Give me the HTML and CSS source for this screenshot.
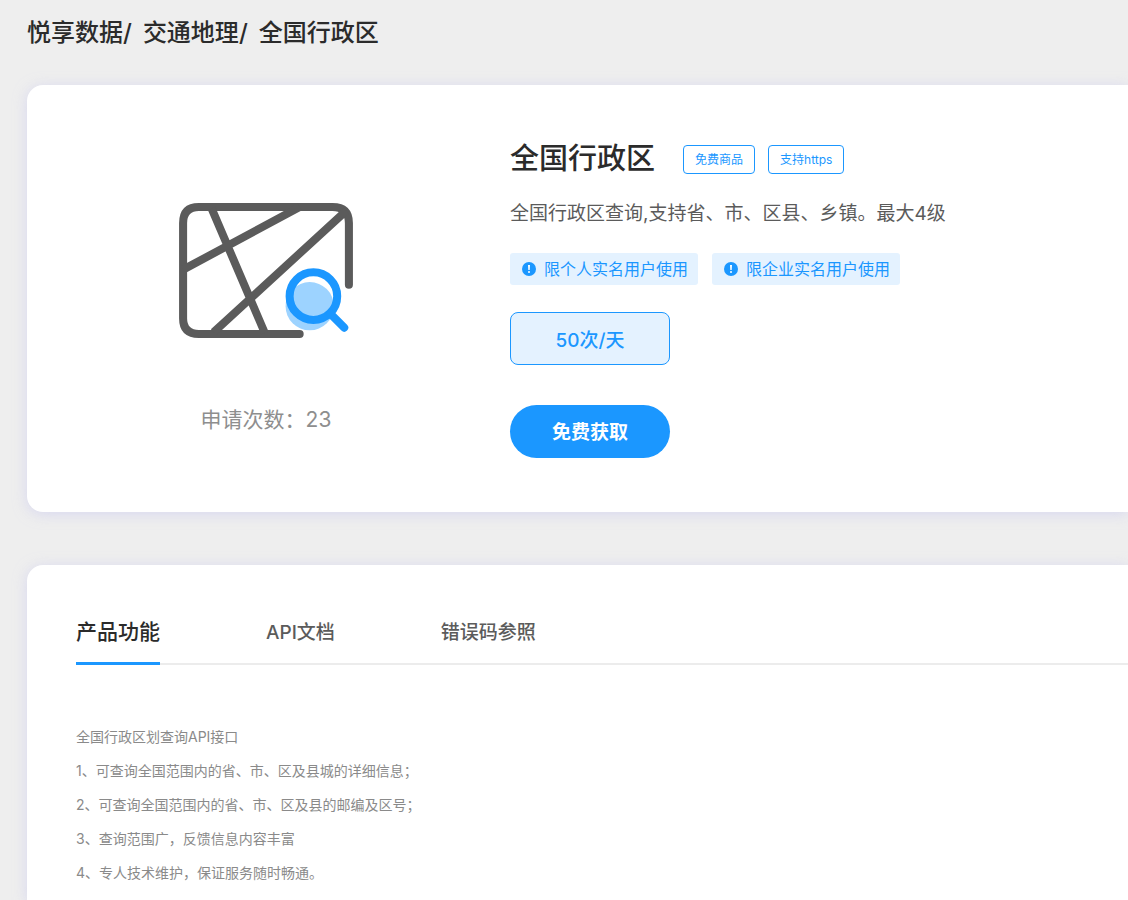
FILE: index.html
```html
<!DOCTYPE html>
<html lang="zh-CN">
<head>
<meta charset="utf-8">
<meta name="viewport" content="width=device-width, initial-scale=1">
<title>全国行政区</title>
<link rel="stylesheet" href="styles.css">
</head>
<body>
<nav class="breadcrumb" aria-label="breadcrumb">
  <a href="#">悦享数据</a><span class="sep">/</span><a href="#">交通地理</a><span class="sep">/</span><span>全国行政区</span>
</nav>
<main class="page">
  <section class="card product">
    <div class="summary">
      <svg class="map-icon" viewBox="42 39 519 403" fill="none" stroke-width="24" aria-hidden="true">
        <g stroke="#5b5b5b">
          <path d="M402 430H101Q54 430 54 384V99Q54 51 101 51H500Q549 51 549 99V283" stroke-linecap="round"/>
          <path d="M54 238L402 51M139 55L298 427M145 425L541 62"/>
        </g>
        <circle cx="432" cy="347" r="72" fill="#9dd3ff"/>
        <g stroke="#1b97ff">
          <circle cx="443" cy="317" r="71"/>
          <path d="M494 370L535 411" stroke-linecap="round"/>
        </g>
      </svg>
      <p class="count">申请次数：23</p>
    </div>
    <div class="detail">
      <div class="heading">
        <h1>全国行政区</h1>
        <div class="badges"><span class="badge">免费商品</span><span class="badge">支持https</span></div>
      </div>
      <p class="description">全国行政区查询,支持省、市、区县、乡镇。最大4级</p>
      <div class="notices">
        <span class="notice"><svg class="alert" viewBox="0 0 14 14" aria-hidden="true"><circle cx="7" cy="7" r="7" fill="#1b97ff"/><path d="M6 3H8L7.700 8H6.300Z" fill="#fff"/><circle cx="7" cy="10" r="1" fill="#fff"/></svg>限个人实名用户使用</span>
        <span class="notice"><svg class="alert" viewBox="0 0 14 14" aria-hidden="true"><circle cx="7" cy="7" r="7" fill="#1b97ff"/><path d="M6 3H8L7.700 8H6.300Z" fill="#fff"/><circle cx="7" cy="10" r="1" fill="#fff"/></svg>限企业实名用户使用</span>
      </div>
      <button class="plan" type="button">50次/天</button>
      <button class="get" type="button">免费获取</button>
    </div>
  </section>
  <section class="card info">
    <div class="tabs" role="tablist">
      <button class="tab active" type="button" role="tab" aria-selected="true">产品功能</button>
      <button class="tab" type="button" role="tab" aria-selected="false">API文档</button>
      <button class="tab" type="button" role="tab" aria-selected="false">错误码参照</button>
    </div>
    <div class="features" role="tabpanel">
      <p>全国行政区划查询API接口</p>
      <p>1、可查询全国范围内的省、市、区及县城的详细信息；</p>
      <p>2、可查询全国范围内的省、市、区及县的邮编及区号；</p>
      <p>3、查询范围广，反馈信息内容丰富</p>
      <p>4、专人技术维护，保证服务随时畅通。</p>
    </div>
  </section>
</main>
</body>
</html>
```
FILE: styles.css
```css
* {
  box-sizing: border-box;
}

body {
  margin: 0;
  background: #eee;
  color: #2b2b2b;
  font-family: Inter, "Noto Sans CJK SC", sans-serif;
}

h1,
p {
  margin: 0;
}

button {
  font-family: inherit;
  cursor: pointer;
}

.breadcrumb {
  padding: 17px 27px 0;
  font-size: 24px;
  font-weight: 500;
  line-height: 32px;
}

.breadcrumb a {
  color: inherit;
  text-decoration: none;
}

.sep {
  margin-right: 11px;
}

.page {
  display: flex;
  flex-direction: column;
  gap: 53px;
  padding: 36px 0 0 27px;
}

.card {
  border-radius: 16px 0 0 16px;
  background: #fff;
  box-shadow: 0 2px 14px rgba(200, 200, 240, 0.6);
}

.product {
  display: flex;
  gap: 5px;
  padding: 54px 0;
}

.summary {
  display: flex;
  flex: 0 0 478px;
  flex-direction: column;
  align-items: center;
  gap: 66px;
  padding-top: 64px;
}

.map-icon {
  width: 174px;
  height: 135px;
}

.count {
  color: #8e8e8e;
  font-size: 21px;
  line-height: 32px;
}

.heading {
  display: flex;
  align-items: center;
  gap: 28px;
}

h1 {
  font-size: 29px;
  font-weight: 500;
  line-height: 40px;
}

.badges {
  display: flex;
  gap: 13px;
}

.badge {
  padding: 0 11px;
  border: 1px solid #1b97ff;
  border-radius: 4px;
  color: #1b97ff;
  font-size: 12px;
  line-height: 27px;
}

.description {
  margin-top: 20px;
  color: #5b5b5b;
  font-size: 19px;
  line-height: 30px;
}

.notices {
  display: flex;
  gap: 14px;
  margin-top: 24px;
}

.notice {
  display: flex;
  align-items: center;
  gap: 8px;
  padding: 0 10px 0 12px;
  border-radius: 3px;
  background: #e4f2ff;
  color: #1b97ff;
  font-size: 16px;
  line-height: 32px;
}

.alert {
  width: 14px;
  height: 14px;
}

.plan,
.get {
  display: block;
  width: 160px;
  height: 53px;
  font-size: 19px;
}

.plan {
  margin-top: 27px;
  border: 1px solid #1b97ff;
  border-radius: 8px;
  background: #e4f2ff;
  color: #1b97ff;
  font-weight: 500;
}

.get {
  margin-top: 40px;
  padding-bottom: 4px;
  border: 0;
  border-radius: 27px;
  background: #1b97ff;
  color: #fff;
  font-weight: 600;
}

.info {
  padding: 42px 0 10px 49px;
  border-radius: 16px 0 0;
}

.tabs {
  display: flex;
  gap: 106px;
  box-shadow: inset 0 -2px #ececec;
}

.tab {
  height: 58px;
  padding: 0 0 8px;
  border: 0;
  border-bottom: 3px solid transparent;
  background: none;
  color: #5b5b5b;
  font-size: 19px;
  font-weight: 500;
}

.tab.active {
  padding-bottom: 10px;
  border-bottom-color: #1b97ff;
  color: #2b2b2b;
  font-size: 21px;
}

.features {
  padding-top: 55px;
  color: #8a8a8a;
  font-size: 14px;
  line-height: 34px;
}
```
